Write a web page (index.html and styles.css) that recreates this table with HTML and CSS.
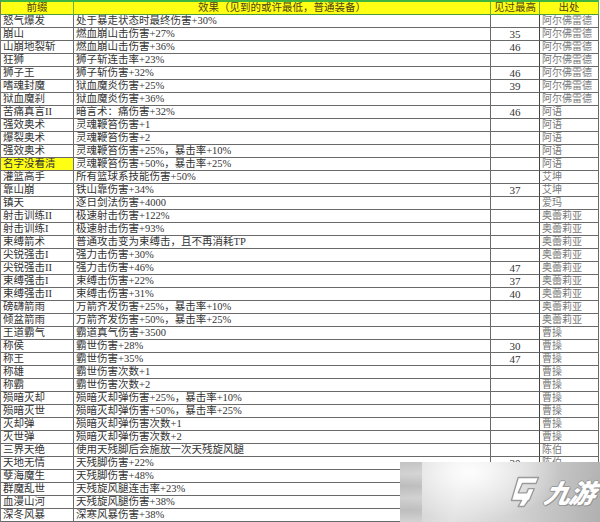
FILE: index.html
```html
<!DOCTYPE html>
<html lang="zh">
<head>
<meta charset="utf-8">
<title>前缀表</title>
<link rel="stylesheet" href="styles.css">
</head>
<body>
<div class="sheet">
<table class="grid">
<colgroup><col class="c1"><col class="c2"><col class="c3"><col class="c4"></colgroup>
<thead>
<tr><th>前缀</th><th>效果（见到的或许最低，普通装备）</th><th>见过最高</th><th>出处</th></tr>
</thead>
<tbody>
<tr><td>怒气爆发</td><td>处于暴走状态时最终伤害+30%</td><td class="num"></td><td class="src">阿尔佛雷德</td></tr>
<tr><td>崩山</td><td>燃血崩山击伤害+27%</td><td class="num">35</td><td class="src">阿尔佛雷德</td></tr>
<tr><td>山崩地裂斩</td><td>燃血崩山击伤害+36%</td><td class="num">46</td><td class="src">阿尔佛雷德</td></tr>
<tr><td>狂狮</td><td>狮子斩连击率+23%</td><td class="num"></td><td class="src">阿尔佛雷德</td></tr>
<tr><td>狮子王</td><td>狮子斩伤害+32%</td><td class="num">46</td><td class="src">阿尔佛雷德</td></tr>
<tr><td>嗜魂封魔</td><td>狱血魔炎伤害+25%</td><td class="num">39</td><td class="src">阿尔佛雷德</td></tr>
<tr><td>狱血魔刹</td><td>狱血魔炎伤害+36%</td><td class="num"></td><td class="src">阿尔佛雷德</td></tr>
<tr><td>苦痛真言II</td><td>暗言术：痛伤害+32%</td><td class="num">46</td><td class="src">阿语</td></tr>
<tr><td>强效奥术</td><td>灵魂鞭笞伤害+1</td><td class="num"></td><td class="src">阿语</td></tr>
<tr><td>爆裂奥术</td><td>灵魂鞭笞伤害+2</td><td class="num"></td><td class="src">阿语</td></tr>
<tr><td>强效奥术</td><td>灵魂鞭笞伤害+25%，暴击率+10%</td><td class="num"></td><td class="src">阿语</td></tr>
<tr><td class="mark">名字没看清</td><td>灵魂鞭笞伤害+50%，暴击率+25%</td><td class="num"></td><td class="src">阿语</td></tr>
<tr><td>灌篮高手</td><td>所有篮球系技能伤害+50%</td><td class="num"></td><td class="src">艾坤</td></tr>
<tr><td>靠山崩</td><td>铁山靠伤害+34%</td><td class="num">37</td><td class="src">艾坤</td></tr>
<tr><td>镇天</td><td>逐日剑法伤害+4000</td><td class="num"></td><td class="src">爱玛</td></tr>
<tr><td>射击训练II</td><td>极速射击伤害+122%</td><td class="num"></td><td class="src">奥蕾莉亚</td></tr>
<tr><td>射击训练I</td><td>极速射击伤害+93%</td><td class="num"></td><td class="src">奥蕾莉亚</td></tr>
<tr><td>束缚箭术</td><td>普通攻击变为束缚击，且不再消耗TP</td><td class="num"></td><td class="src">奥蕾莉亚</td></tr>
<tr><td>尖锐强击I</td><td>强力击伤害+30%</td><td class="num"></td><td class="src">奥蕾莉亚</td></tr>
<tr><td>尖锐强击II</td><td>强力击伤害+46%</td><td class="num">47</td><td class="src">奥蕾莉亚</td></tr>
<tr><td>束缚强击I</td><td>束缚击伤害+22%</td><td class="num">37</td><td class="src">奥蕾莉亚</td></tr>
<tr><td>束缚强击II</td><td>束缚击伤害+31%</td><td class="num">40</td><td class="src">奥蕾莉亚</td></tr>
<tr><td>磅礴箭雨</td><td>万箭齐发伤害+25%，暴击率+10%</td><td class="num"></td><td class="src">奥蕾莉亚</td></tr>
<tr><td>倾盆箭雨</td><td>万箭齐发伤害+50%，暴击率+25%</td><td class="num"></td><td class="src">奥蕾莉亚</td></tr>
<tr><td>王道霸气</td><td>霸道真气伤害+3500</td><td class="num"></td><td class="src">曹操</td></tr>
<tr><td>称侯</td><td>霸世伤害+28%</td><td class="num">30</td><td class="src">曹操</td></tr>
<tr><td>称王</td><td>霸世伤害+35%</td><td class="num">47</td><td class="src">曹操</td></tr>
<tr><td>称雄</td><td>霸世伤害次数+1</td><td class="num"></td><td class="src">曹操</td></tr>
<tr><td>称霸</td><td>霸世伤害次数+2</td><td class="num"></td><td class="src">曹操</td></tr>
<tr><td>殒暗灭却</td><td>殒暗灭却弹伤害+25%，暴击率+10%</td><td class="num"></td><td class="src">曹操</td></tr>
<tr><td>殒暗灭世</td><td>殒暗灭却弹伤害+50%，暴击率+25%</td><td class="num"></td><td class="src">曹操</td></tr>
<tr><td>灭却弹</td><td>殒暗灭却弹伤害次数+1</td><td class="num"></td><td class="src">曹操</td></tr>
<tr><td>灭世弹</td><td>殒暗灭却弹伤害次数+2</td><td class="num"></td><td class="src">曹操</td></tr>
<tr><td>三界天绝</td><td>使用天残脚后会施放一次天残旋风腿</td><td class="num"></td><td class="src">陈伯</td></tr>
<tr><td>天地无情</td><td>天残脚伤害+22%</td><td class="num">30</td><td class="src">陈伯</td></tr>
<tr><td>孽海魔生</td><td>天残脚伤害+48%</td><td class="num"></td><td class="src">陈伯</td></tr>
<tr><td>群魔乱世</td><td>天残旋风腿连击率+23%</td><td class="num"></td><td class="src">陈伯</td></tr>
<tr><td>血漫山河</td><td>天残旋风腿伤害+38%</td><td class="num"></td><td class="src">陈伯</td></tr>
<tr><td>深冬风暴</td><td>深寒风暴伤害+38%</td><td class="num"></td><td class="src">陈伯</td></tr>
</tbody>
</table>
<div class="watermark">
  <div class="wm-blur"></div>
  <svg class="wm-logo" viewBox="0 0 40 40" width="34" height="34" aria-hidden="true">
    <path d="M12 3 H36 L33 10 H17 L12 21 H22 L24 16 H31 L25 30 H24 L19 37 H12 L16 30 H4 Z" fill="#fff" stroke="#9a9a9a" stroke-width="1.6" stroke-linejoin="round"/>
  </svg>
  <span class="wm-text">九游</span>
</div>
</div>
</body>
</html>
```

FILE: styles.css
```css
html, body {
  margin: 0;
  padding: 0;
  background: #fff;
}
.sheet {
  position: relative;
  width: 600px;
  height: 522px;
  overflow: hidden;
}
.grid {
  border-collapse: separate;
  border-spacing: 0;
  table-layout: fixed;
  width: 598px;
  font-family: "Liberation Serif", "Noto Sans CJK SC", serif;
  font-size: 10.5px;
  color: #333;
  border-top: 2px solid #3fb53f;
  border-left: 1px solid #777;
}
.c1 { width: 73px; }
.c2 { width: 417px; }
.c3 { width: 49px; }
.c4 { width: 59px; }
.grid th, .grid td {
  height: 12px;
  padding: 0 0 0 2px;
  line-height: 12px;
  border-bottom: 1px solid #6a6a6a;
  border-right: 1px solid #6a6a6a;
  white-space: nowrap;
  overflow: hidden;
  text-align: left;
  font-weight: normal;
}
.grid th {
  background: #ffff14;
  color: #4d4218;
  text-align: center;
  padding: 0;
  border-bottom-color: #4f9a3a;
  border-right-color: #6fae3a;
}
.grid td.num {
  text-align: center;
  padding: 0;
  color: #333;
  font-size: 11px;
}
.grid td:nth-child(3) { border-right-color: #444; }
.grid td.src {
  color: #7a7a7a;
  font-size: 10px;
}
.grid td.mark {
  background: #ffff14;
}
.watermark {
  position: absolute;
  left: 400px;
  top: 462px;
  width: 200px;
  height: 60px;
  background:
    radial-gradient(ellipse 90px 50px at 70px 10px, rgba(255,255,255,0.95), rgba(255,255,255,0) 100%),
    linear-gradient(100deg, #cfcfcf 0%, #e2e2e2 30%, #d2d2d2 60%, #b0b0b0 100%);
  display: flex;
  align-items: center;
  justify-content: flex-end;
  gap: 3px;
  padding-right: 5px;
  box-sizing: border-box;
}
.wm-blur {
  position: absolute;
  left: 0;
  top: 0;
  width: 22px;
  height: 60px;
  background: linear-gradient(180deg, #bdbdbd 0%, #d0d0d0 20%, #b5b5b5 40%, #cfcfcf 60%, #b9b9b9 80%, #d2d2d2 100%);
  opacity: 0.8;
}
.wm-logo {
  flex: none;
}
.wm-text {
  font-family: "Noto Sans CJK SC", sans-serif;
  font-size: 26px;
  font-weight: 900;
  font-style: italic;
  color: #fff;
  line-height: 1;
  letter-spacing: -1px;
  text-shadow: 1px 0 #999, -1px 0 #999, 0 1px #999, 0 -1px #999, 1px 1px #888;
  transform: skewX(-12deg);
}
```
